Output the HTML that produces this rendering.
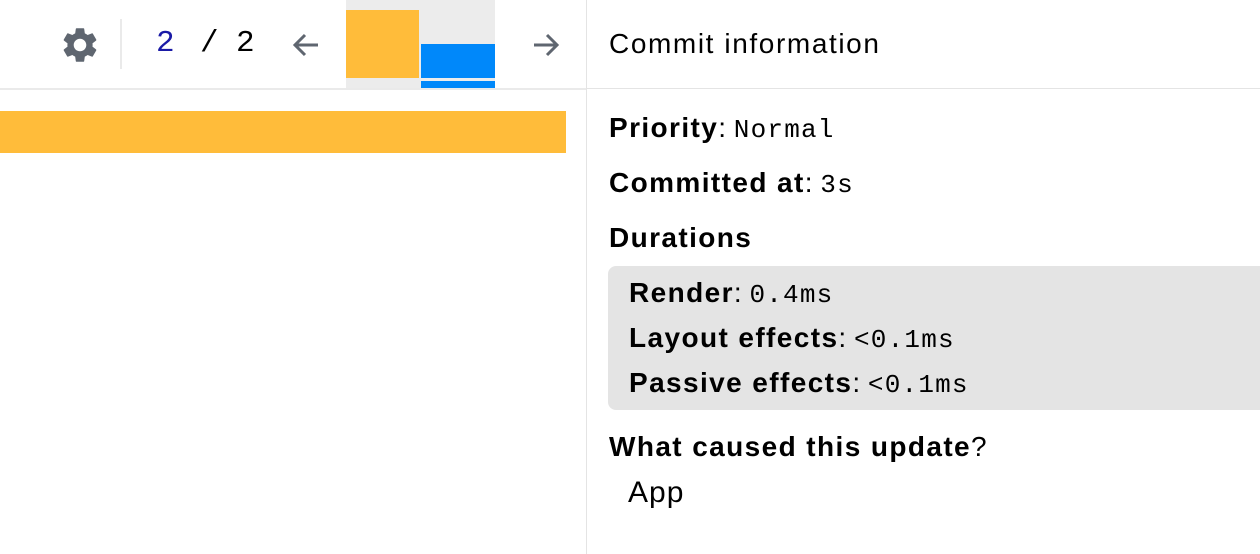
<!DOCTYPE html>
<html><head><style>
*{margin:0;padding:0;box-sizing:border-box}
body{width:1260px;height:554px;background:#fff;position:relative;overflow:hidden;font-family:"Liberation Sans",sans-serif;color:#000}
.a{position:absolute;white-space:nowrap}
.b{font-weight:bold;font-size:28px;letter-spacing:1.4px}
.m{font-family:"Liberation Mono","DejaVu Sans Mono",monospace;font-size:26px;font-weight:normal;letter-spacing:1.2px}
.n{font-size:28px;letter-spacing:1.6px}
</style></head><body>
<div class="a" style="left:0;top:88px;width:586px;height:2px;background:#eaeaea"></div>
<div class="a" style="left:586px;top:0;width:1px;height:554px;background:#e4e4e4"></div>
<div class="a" style="left:587px;top:88px;width:673px;height:1px;background:#e4e4e4"></div>
<svg class="a" style="left:59px;top:24px" width="42" height="42" viewBox="0 0 24 24"><path fill="#5f6670" d="M19.14 12.94c.04-.3.06-.61.06-.94 0-.32-.02-.64-.07-.94l2.03-1.580a.49.49 0 0 0 .12-.61l-1.92-3.32a.488.488 0 0 0-.59-.22l-2.39.96c-.5-.38-1.030-.7-1.62-.94l-.36-2.54a.484.484 0 0 0-.48-.41h-3.84c-.24 0-.43.17-.47.41l-.36 2.54c-.59.24-1.13.57-1.62.94l-2.39-.96c-.22-.08-.47 0-.59.22L2.74 8.87c-.12.21-.08.47.12.61l2.03 1.58c-.05.3-.09.63-.09.94s.02.64.07.94l-2.03 1.58a.49.49 0 0 0-.12.61l1.92 3.32c.12.22.37.29.59.22l2.39-.96c.5.38 1.03.7 1.62.94l.36 2.54c.05.24.24.41.48.41h3.84c.24 0 .44-.17.47-.41l.36-2.54c.59-.24 1.13-.56 1.62-.94l2.39.96c.22.08.47 0 .59-.22l1.92-3.32c.12-.22.07-.47-.12-.61l-2.01-1.58zM12 15.6c-1.98 0-3.6-1.62-3.6-3.6s1.62-3.6 3.6-3.6 3.6 1.62 3.6 3.6-1.62 3.6-3.6 3.6z"/></svg>
<div class="a" style="left:120px;top:19px;width:2px;height:50px;background:#eaeaea"></div>
<div class="a m" style="left:156px;top:26px;font-size:31px;color:#1a1aa6">2</div>
<div class="a m" style="left:200px;top:26px;font-size:31px">/</div>
<div class="a m" style="left:236px;top:26px;font-size:31px">2</div>
<svg class="a" style="left:290px;top:30px" width="32" height="30" viewBox="0 0 32 30"><path d="M28 15H6M15 5L5 15l10 10" stroke="#5f6670" stroke-width="3" fill="none"/></svg>
<svg class="a" style="left:530px;top:30px" width="32" height="30" viewBox="0 0 32 30"><path d="M4 15h22M17 5l10 10-10 10" stroke="#5f6670" stroke-width="3" fill="none"/></svg>
<div class="a" style="left:346px;top:0;width:149px;height:88px;background:#ececec"></div>
<div class="a" style="left:346px;top:10px;width:73px;height:68px;background:#ffbc3a"></div>
<div class="a" style="left:421px;top:44px;width:74px;height:34px;background:#0088fa"></div>
<div class="a" style="left:421px;top:81px;width:74px;height:7px;background:#0088fa"></div>
<div class="a" style="left:0;top:111px;width:566px;height:42px;background:#ffbc3a"></div>
<div class="a n" style="left:609px;top:28px">Commit information</div>
<div class="a b" style="left:609px;top:112px">Priority<span style="font-weight:normal;letter-spacing:0">: </span><span class="m">Normal</span></div>
<div class="a b" style="left:609px;top:167px">Committed at<span style="font-weight:normal;letter-spacing:0">: </span><span class="m">3s</span></div>
<div class="a b" style="left:609px;top:222px">Durations</div>
<div class="a" style="left:608px;top:266px;width:660px;height:144px;background:#e4e4e4;border-radius:8px"></div>
<div class="a b" style="left:629px;top:277px">Render<span style="font-weight:normal;letter-spacing:0">: </span><span class="m">0.4ms</span></div>
<div class="a b" style="left:629px;top:322px">Layout effects<span style="font-weight:normal;letter-spacing:0">: </span><span class="m">&lt;0.1ms</span></div>
<div class="a b" style="left:629px;top:367px">Passive effects<span style="font-weight:normal;letter-spacing:0">: </span><span class="m">&lt;0.1ms</span></div>
<div class="a b" style="left:609px;top:431px">What caused this update<span style="font-weight:normal;letter-spacing:0">?</span></div>
<div class="a n" style="left:628px;top:476px;font-size:30px;letter-spacing:1px">App</div>
</body></html>
